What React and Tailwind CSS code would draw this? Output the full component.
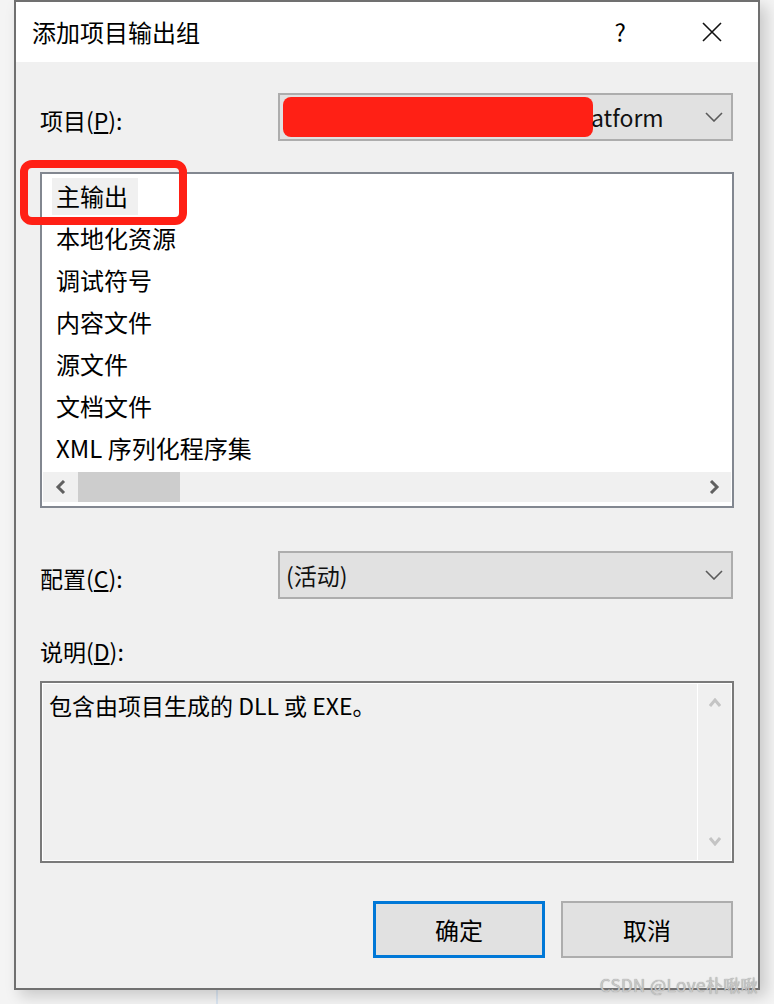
import React from 'react';

const font = { fontFamily: '"Noto Sans CJK SC", "Noto Sans", sans-serif' };

function Chevron({ className = '' }) {
  // thin combobox arrow
  return (
    <svg width="18" height="10" viewBox="0 0 18 10" className={className}>
      <polyline points="1,1 9,9 17,1" fill="none" stroke="#5a5a5a" strokeWidth="1.6" />
    </svg>
  );
}

function ComboBox({ children }) {
  return (
    <div className="w-[455px] h-[48px] border-2 border-[#adadad] bg-[#e1e1e1] flex items-center pl-[6px] pr-[8px] relative">
      <div className="flex-1 text-[23px] text-black leading-none">{children}</div>
      <Chevron />
    </div>
  );
}

const items = ['主输出', '本地化资源', '调试符号', '内容文件', '源文件', '文档文件', 'XML 序列化程序集'];

export default function App() {
  return (
    <div className="w-[774px] h-[1004px] bg-[#f4f4f4] relative overflow-hidden" style={font}>
      {/* background line of the window behind */}
      <div className="absolute left-[216px] top-[990px] w-[2px] h-[14px] bg-[#dbe6f2]"></div>

      {/* dialog */}
      <div className="ml-[14px] w-[746px] h-[990px] border-2 border-[#707070] flex flex-col shadow-[6px_6px_14px_rgba(0,0,0,0.18)] relative">
        {/* title bar */}
        <div className="h-[60px] bg-white flex items-center pl-[16px] pr-[36px]">
          <span className="text-[24px] text-black flex-1">添加项目输出组</span>
          <span className="text-[24px] text-black mr-[76px]">?</span>
          <svg width="20" height="20" viewBox="0 0 20 20">
            <path d="M1 1 L19 19 M19 1 L1 19" stroke="#111" strokeWidth="1.6" />
          </svg>
        </div>

        {/* body */}
        <div className="flex-1 bg-[#f0f0f0] pl-[24px] pr-[24px] pt-[31px] flex flex-col">
          {/* project row */}
          <div className="flex items-center">
            <div className="w-[238px] text-[23px] leading-[30px] text-black pt-[6px]">项目(<span className="underline underline-offset-2">P</span>):</div>
            <ComboBox>
              <div className="flex items-center">
                <div className="w-[310px] h-[40px] rounded-[8px] bg-[#ff2015] -ml-[3px]"></div>
                <span className="-ml-[2px] text-[#111]">atform</span>
              </div>
            </ComboBox>
          </div>

          {/* output group list */}
          <div className="mt-[31px] w-[694px] h-[336px] border-2 border-[#828790] bg-white p-px flex flex-col">
            <div className="flex-1 pl-[9px] flex flex-col">
              {items.map((it, i) => (
                <div key={it} className="h-[42px] flex items-center">
                  <span className={`text-[24px] leading-none text-black px-[4px] h-[37px] flex items-center ${i === 0 ? 'bg-[#f0f0f0] pr-[10px]' : ''}`}>{it}</span>
                </div>
              ))}
            </div>
            <div className="h-[30px] bg-[#f0f0f0] flex items-center mb-[3px]">
              <div className="w-[35px] flex justify-center">
                <svg width="12" height="14" viewBox="0 0 12 14">
                  <polyline points="9,1 3,7 9,13" fill="none" stroke="#606060" strokeWidth="3" />
                </svg>
              </div>
              <div className="w-[102px] h-[30px] bg-[#cdcdcd]"></div>
              <div className="flex-1"></div>
              <div className="w-[35px] flex justify-center">
                <svg width="12" height="14" viewBox="0 0 12 14">
                  <polyline points="3,1 9,7 3,13" fill="none" stroke="#606060" strokeWidth="3" />
                </svg>
              </div>
            </div>
          </div>

          {/* config row */}
          <div className="flex items-center mt-[43px]">
            <div className="w-[238px] text-[23px] leading-[30px] text-black pt-[6px]">配置(<span className="underline underline-offset-2">C</span>):</div>
            <ComboBox>
              <span className="text-[#111]">(活动)</span>
            </ComboBox>
          </div>

          {/* description */}
          <div className="mt-[37px] text-[23px] text-black leading-[30px]">说明(<span className="underline underline-offset-2">D</span>):</div>
          <div className="mt-[15px] w-[694px] h-[182px] border-2 border-[#7a7a7a] bg-white p-px flex">
            <div className="flex-1 bg-[#f0f0f0] pl-[6px] pt-[6px] text-[23px] text-black leading-[30px]">包含由项目生成的 DLL 或 EXE。</div>
            <div className="w-px bg-white"></div>
            <div className="w-[33px] bg-[#f0f0f0] flex flex-col items-center justify-between py-[14px]">
              <svg width="12" height="10" viewBox="0 0 12 10">
                <polyline points="1,8 6,2 11,8" fill="none" stroke="#c4c4c4" strokeWidth="3" />
              </svg>
              <svg width="12" height="10" viewBox="0 0 12 10">
                <polyline points="1,2 6,8 11,2" fill="none" stroke="#c4c4c4" strokeWidth="3" />
              </svg>
            </div>
          </div>

          {/* buttons */}
          <div className="mt-[38px] flex justify-end gap-[16px] pr-px">
            <button className="w-[172px] h-[57px] border-[3px] border-[#0078d7] bg-[#e1e1e1] text-[24px] text-black">确定</button>
            <button className="w-[172px] h-[57px] border-2 border-[#adadad] bg-[#e1e1e1] text-[24px] text-black">取消</button>
          </div>
        </div>
      </div>

      {/* red annotation box */}
      <div className="absolute left-[20px] top-[160px] w-[167px] h-[65px] border-[8px] border-[#ff2015] rounded-[12px]"></div>

      {/* watermark */}
      <div className="absolute right-[16px] top-[972px] text-[17px] text-[#c8c8c8] tracking-wide" style={{ textShadow: '0 0 1px #888' }}>CSDN @Love朴啾啾</div>
    </div>
  );
}
